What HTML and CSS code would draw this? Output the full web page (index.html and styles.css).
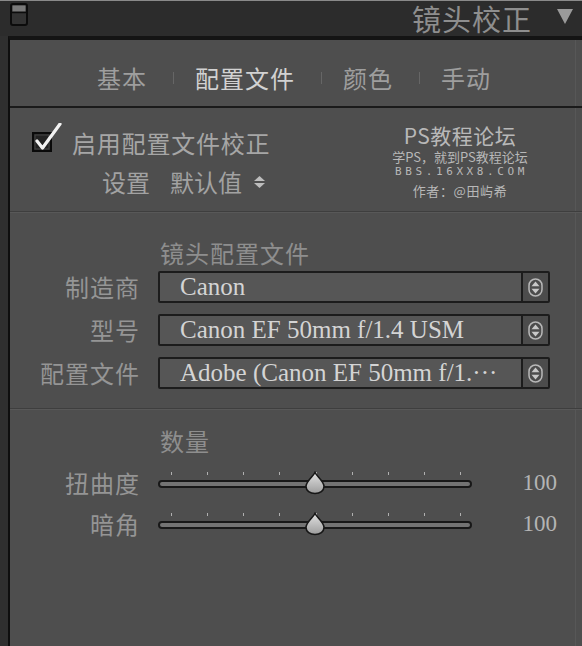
FILE: index.html
```html
<!DOCTYPE html>
<html lang="zh-CN">
<head>
<meta charset="utf-8">
<title>镜头校正</title>
<link rel="stylesheet" href="styles.css">
</head>
<body>
<div class="app">
  <header class="header">
    <svg class="panel-toggle" width="18" height="23" viewBox="0 0 18 23">
      <rect x="1" y="1" width="16" height="21" rx="2" fill="#333" stroke="#0c0c0c" stroke-width="2"/>
      <rect x="2.5" y="2.5" width="13" height="6" fill="#7a7a7a"/>
      <line x1="2" y1="9.5" x2="16" y2="9.5" stroke="#0c0c0c" stroke-width="1.5"/>
    </svg>
    <h1 class="title">镜头校正</h1>
    <svg class="collapse" width="16" height="16" viewBox="0 0 16 16">
      <path d="M0 1 L16 1 L8 16 Z" fill="#9a9a9a"/>
    </svg>
  </header>
  <div class="main">
    <div class="panel">
      <nav class="tabs">
        <span class="tab">基本</span>
        <span class="sep"></span>
        <span class="tab active">配置文件</span>
        <span class="sep"></span>
        <span class="tab">颜色</span>
        <span class="sep"></span>
        <span class="tab">手动</span>
      </nav>

      <section class="enable">
        <div class="enable-left">
          <div class="check-row">
            <svg class="checkbox" width="30" height="30" viewBox="0 0 30 30">
              <rect x="1" y="10" width="18" height="18" fill="#222" stroke="#0a0a0a" stroke-width="2"/>
              <rect x="3" y="12" width="14" height="14" fill="none" stroke="#444" stroke-width="1"/>
              <path d="M5 18 L10.5 25 L28 1" fill="none" stroke="#f2f2f2" stroke-width="3.2" stroke-linecap="round" stroke-linejoin="round"/>
            </svg>
            <span class="check-label">启用配置文件校正</span>
          </div>
          <div class="setup-row">
            <span class="setup-label">设置</span>
            <span class="setup-value">默认值</span>
            <svg class="updown" width="11" height="12" viewBox="0 0 11 12">
              <path d="M5.5 0 L11 5 L0 5 Z" fill="#bdbdbd"/>
              <path d="M0 7 L11 7 L5.5 12 Z" fill="#bdbdbd"/>
            </svg>
          </div>
        </div>
        <div class="watermark">
          <div class="wm1">PS教程论坛</div>
          <div class="wm2">学PS，就到PS教程论坛</div>
          <div class="wm3">BBS.16XX8.COM</div>
          <div class="wm4">作者：@田屿希</div>
        </div>
      </section>

      <section class="profile">
        <div class="heading">镜头配置文件</div>

        <div class="label">制造商</div>
        <div class="select">
          <span class="select-text">Canon</span>
          <span class="select-arrow">
            <svg width="15" height="19" viewBox="0 0 15 19"><rect x="1" y="1" width="13" height="17" rx="6.5" fill="none" stroke="#b8b8b8" stroke-width="1.5"/><path d="M7.5 3.5 L11.5 8.2 L3.5 8.2 Z" fill="#c8c8c8"/><path d="M3.5 10.8 L11.5 10.8 L7.5 15.5 Z" fill="#c8c8c8"/></svg>
          </span>
        </div>

        <div class="label">型号</div>
        <div class="select">
          <span class="select-text">Canon EF 50mm f/1.4 USM</span>
          <span class="select-arrow">
            <svg width="15" height="19" viewBox="0 0 15 19"><rect x="1" y="1" width="13" height="17" rx="6.5" fill="none" stroke="#b8b8b8" stroke-width="1.5"/><path d="M7.5 3.5 L11.5 8.2 L3.5 8.2 Z" fill="#c8c8c8"/><path d="M3.5 10.8 L11.5 10.8 L7.5 15.5 Z" fill="#c8c8c8"/></svg>
          </span>
        </div>

        <div class="label">配置文件</div>
        <div class="select">
          <span class="select-text">Adobe (Canon EF 50mm f/1.···</span>
          <span class="select-arrow">
            <svg width="15" height="19" viewBox="0 0 15 19"><rect x="1" y="1" width="13" height="17" rx="6.5" fill="none" stroke="#b8b8b8" stroke-width="1.5"/><path d="M7.5 3.5 L11.5 8.2 L3.5 8.2 Z" fill="#c8c8c8"/><path d="M3.5 10.8 L11.5 10.8 L7.5 15.5 Z" fill="#c8c8c8"/></svg>
          </span>
        </div>
      </section>

      <section class="amount">
        <div class="heading">数量</div>

        <div class="label">扭曲度</div>
        <div class="slider">
          <div class="ticks"><i></i><i></i><i></i><i></i><i></i><i></i><i></i><i></i><i></i></div>
          <div class="track"></div>
          <svg class="thumb" width="24" height="24" viewBox="0 0 24 24">
            <defs><linearGradient id="g1" x1="0" y1="0" x2="0" y2="1"><stop offset="0" stop-color="#e2e2e2"/><stop offset="1" stop-color="#9c9c9c"/></linearGradient></defs>
            <path d="M12 1.5 C13.5 5 21 10 21 15.5 C21 19.8 17 22.5 12 22.5 C7 22.5 3 19.8 3 15.5 C3 10 10.5 5 12 1.5 Z" fill="url(#g1)" stroke="#161616" stroke-width="1.6"/>
          </svg>
        </div>
        <div class="value">100</div>

        <div class="label">暗角</div>
        <div class="slider">
          <div class="ticks"><i></i><i></i><i></i><i></i><i></i><i></i><i></i><i></i><i></i></div>
          <div class="track"></div>
          <svg class="thumb" width="24" height="24" viewBox="0 0 24 24">
            <defs><linearGradient id="g2" x1="0" y1="0" x2="0" y2="1"><stop offset="0" stop-color="#e2e2e2"/><stop offset="1" stop-color="#9c9c9c"/></linearGradient></defs>
            <path d="M12 1.5 C13.5 5 21 10 21 15.5 C21 19.8 17 22.5 12 22.5 C7 22.5 3 19.8 3 15.5 C3 10 10.5 5 12 1.5 Z" fill="url(#g2)" stroke="#161616" stroke-width="1.6"/>
          </svg>
        </div>
        <div class="value">100</div>
      </section>
    </div>
  </div>
</div>
</body>
</html>
```

FILE: styles.css
```css
* { box-sizing: border-box; }

html, body {
  margin: 0;
  padding: 0;
}

body {
  width: 582px;
  height: 646px;
  overflow: hidden;
  background: #2e2e2e;
  font-family: "Noto Sans CJK SC", "Liberation Sans", sans-serif;
  color: #9c9c9c;
}

.app {
  display: flex;
  flex-direction: column;
  height: 646px;
}

/* header */
.header {
  height: 36px;
  flex: none;
  border-top: 1px solid #8a8a8a;
  background: #2c2c2c;
  display: flex;
  align-items: center;
  padding: 0 9px 0 10px;
}

.panel-toggle {
  align-self: flex-start;
  margin-top: 2px;
}

.title {
  margin: 0 0 0 auto;
  font-size: 29px;
  line-height: 32px;
  letter-spacing: 1px;
  font-weight: 400;
  color: #8e8e8e;
  margin-bottom: 2px;
}

.collapse {
  margin-left: 25px;
  margin-bottom: 6px;
}

/* main frame */
.main {
  flex: 1;
  display: flex;
  padding-left: 8px;
  background: #2f2f2f;
}

.panel {
  flex: 1;
  background: #4e4e4e;
  border-left: 2px solid #0e0e0e;
  border-top: 4px solid #141414;
  box-shadow: inset -6px 0 0 #4e4e4e, inset -7px 0 0 #575757;
}

/* tabs */
.tabs {
  display: flex;
  align-items: center;
  padding: 22px 0 12px 87px;
  height: 68px;
  border-bottom: 2px solid #1a1a1a;
}

.tab {
  font-size: 24px;
  line-height: 28px;
  letter-spacing: 1px;
  color: #9e9e9e;
}

.tab.active {
  color: #d2d2d2;
}

.sep {
  width: 1px;
  height: 12px;
  background: #666;
  margin: 0 21px 0 26px;
}

/* enable section */
.enable {
  display: flex;
  align-items: flex-start;
  height: 104px;
  border-bottom: 1px solid #3e3e3e;
  box-shadow: 0 1px 0 #585858;
}

.enable-left {
  flex: 1;
  padding: 20px 0 0 22px;
}

.check-row {
  display: flex;
  align-items: center;
  height: 30px;
}

.checkbox {
  margin-top: -10px;
  margin-right: 10px;
}

.check-label {
  font-size: 24px;
  line-height: 30px;
  letter-spacing: 0.8px;
  color: #a6a6a6;
}

.setup-row {
  display: flex;
  align-items: center;
  height: 30px;
  margin-top: 9px;
  padding-left: 70px;
}

.setup-label,
.setup-value {
  font-size: 24px;
  line-height: 30px;
  color: #a2a2a2;
}

.setup-value {
  margin-left: 20px;
}

.updown {
  margin-left: 12px;
}

.watermark {
  width: 170px;
  margin: 13px 37px 0 0;
  text-align: center;
  color: #b8b8b8;
}

.wm1 {
  font-size: 21px;
  line-height: 28px;
  letter-spacing: 0.5px;
}

.wm2 {
  font-size: 13px;
  line-height: 16px;
}

.wm3 {
  font-family: "DejaVu Sans Mono", "Liberation Mono", monospace;
  font-size: 11px;
  line-height: 14px;
  letter-spacing: 3.6px;
  padding-left: 3px;
}

.wm4 {
  font-size: 13px;
  line-height: 24px;
  letter-spacing: 0.6px;
}

/* shared label grid */
.profile,
.amount {
  display: grid;
  column-gap: 18px;
  align-items: center;
}

.heading {
  grid-column: 2;
  font-size: 24px;
  line-height: 30px;
  letter-spacing: 1px;
  color: #8e8e8e;
  padding-left: 2px;
}

.label {
  grid-column: 1;
  text-align: right;
  font-size: 24px;
  line-height: 30px;
  letter-spacing: 1px;
  color: #959595;
}

/* profile section */
.profile {
  grid-template-columns: 130px 392px;
  row-gap: 11px;
  padding: 26px 0 19px 0;
  border-bottom: 1px solid #3e3e3e;
  box-shadow: 0 1px 0 #585858;
}

.profile .heading {
  margin-bottom: -8px;
}

.select {
  grid-column: 2;
  display: flex;
  height: 32px;
  border: 2px solid #1c1c1c;
  border-radius: 2px;
  background: #565656;
}

.select-text {
  flex: 1;
  padding-left: 20px;
  font-family: "Liberation Serif", serif;
  font-size: 25px;
  line-height: 28px;
  color: #d4d4d4;
  white-space: nowrap;
  overflow: hidden;
}

.select-arrow {
  width: 27px;
  border-left: 2px solid #1c1c1c;
  background: #4c4c4c;
  display: flex;
  align-items: center;
  justify-content: center;
}

/* amount section */
.amount {
  grid-template-columns: 130px 314px 67px;
  row-gap: 11px;
  padding-top: 17px;
}

.amount .heading {
  margin-bottom: 1px;
}

.slider {
  grid-column: 2;
  position: relative;
  height: 30px;
  display: flex;
  align-items: center;
}

.track {
  width: 100%;
  height: 8px;
  border: 2px solid #181818;
  border-radius: 4px;
  background: #737373;
  margin-top: 2px;
}

.ticks {
  position: absolute;
  left: 13px;
  right: 11px;
  top: 4px;
  display: flex;
  justify-content: space-between;
}

.ticks i {
  display: block;
  width: 1px;
  height: 3px;
  background: #b0b0b0;
}

.thumb {
  position: absolute;
  left: 145px;
  top: 3px;
}

.value {
  grid-column: 3;
  text-align: right;
  font-family: "Liberation Serif", serif;
  font-size: 23px;
  line-height: 30px;
  color: #b4b4b4;
}
```
